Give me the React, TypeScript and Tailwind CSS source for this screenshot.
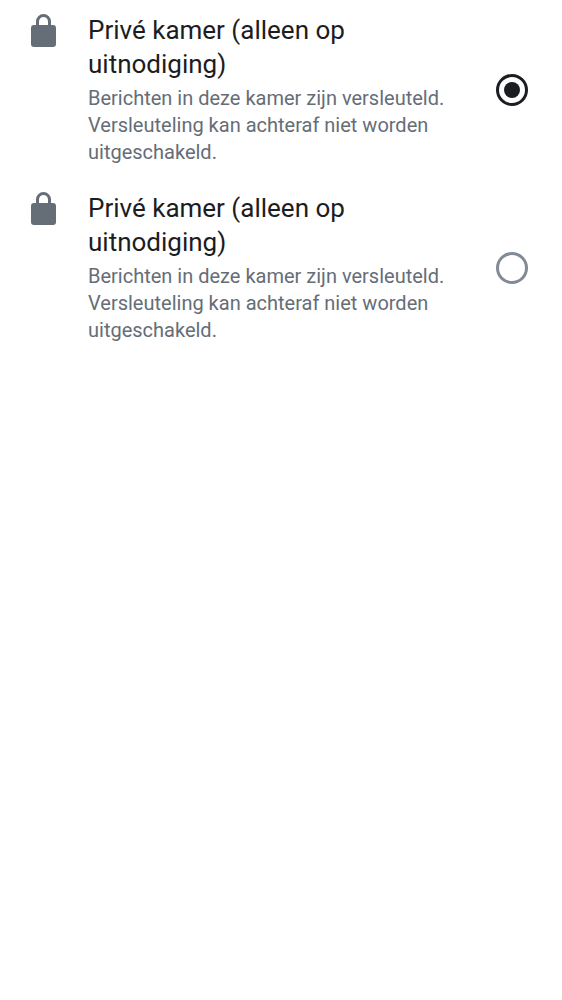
import { useState } from "react";

const options = ["first", "second"];

function LockIcon() {
  return (
    <svg viewBox="0 0 25 34" className="h-[34px] w-[25px] shrink-0 fill-[#656d77]" aria-hidden="true">
      <path
        fillRule="evenodd"
        d="M5 12V8.500a7.500 7.500 0 0 1 15 0V12h2a3 3 0 0 1 3 3v16a3 3 0 0 1-3 3H3a3 3 0 0 1-3-3V15a3 3 0 0 1 3-3zM8 12h9V8.500a4.500 4.500 0 0 0-9 0z"
      />
    </svg>
  );
}

export default function App() {
  const [selected, setSelected] = useState("first");
  return (
    <main className="min-h-screen bg-white font-[Roboto,sans-serif]">
      {options.map((id) => (
        <label key={id} className="flex cursor-pointer gap-8 pt-[13px] pr-[34px] pb-3 pl-[31px]">
          <LockIcon />
          <span className="flex min-w-0 flex-1 flex-col gap-1">
            <span className="text-[26px] leading-[34px] text-[#1b1d22]">
              Privé kamer (alleen op uitnodiging)
            </span>
            <span className="text-[20px] leading-[27px] text-[#656d77]">
              Berichten in deze kamer zijn versleuteld. Versleuteling kan achteraf niet worden uitgeschakeld.
            </span>
          </span>
          <input
            type="radio"
            name="room-access"
            value={id}
            checked={selected === id}
            onChange={() => setSelected(id)}
            className="size-8 shrink-0 appearance-none self-center rounded-full border-[3px] border-[#818a95] checked:border-[#1b1d22] checked:bg-[#1b1d22] checked:bg-clip-content checked:p-[5px]"
          />
        </label>
      ))}
    </main>
  );
}
